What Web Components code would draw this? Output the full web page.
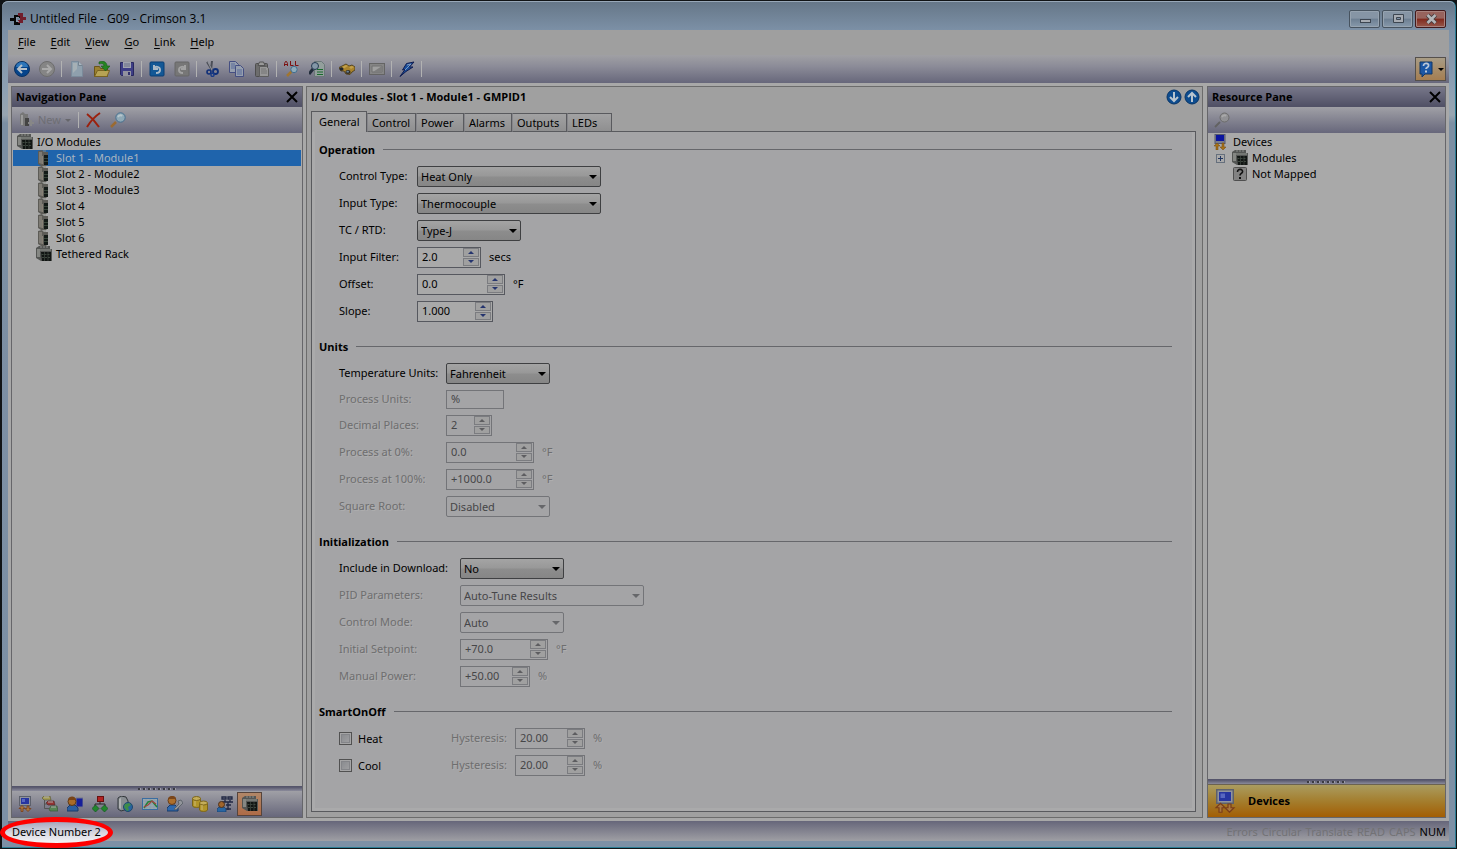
<!DOCTYPE html>
<html lang="en">
<head>
<meta charset="utf-8">
<title>Untitled File - G09 - Crimson 3.1</title>
<style>
html, body { margin: 0; }
body {
  min-height: 100vh; box-sizing: border-box; padding: 1px 1px 1px 2px; display: flex;
  background: #111416; color: #000;
  font: 11px/16px "Noto Sans", "Open Sans", sans-serif;
}
</style>
</head>
<body>
<cr-window>
  <cr-titlebar slot="title">Untitled File - G09 - Crimson 3.1</cr-titlebar>
  <cr-menubar slot="menu" items="File,Edit,View,Go,Link,Help"></cr-menubar>
  <cr-toolbar slot="toolbar" items="back:Back,forward:Forward,|,new:New,open:Open,save:Save,|,undo:Undo,redo:Redo,|,cut:Cut,copy:Copy,paste:Paste,|,findall:Find all,find:Find,|,binoc:Browse,|,screen:Screen,|,bolt:Download,|">
    <cr-help-button slot="end"></cr-help-button>
  </cr-toolbar>

  <cr-pane slot="left" heading="Navigation Pane">
    <cr-pane-tools slot="tools" kind="nav"></cr-pane-tools>
    <cr-tree-item icon="rack">I/O Modules</cr-tree-item>
    <cr-tree-item icon="module" level="1" selected>Slot 1 - Module1</cr-tree-item>
    <cr-tree-item icon="module" level="1">Slot 2 - Module2</cr-tree-item>
    <cr-tree-item icon="module" level="1">Slot 3 - Module3</cr-tree-item>
    <cr-tree-item icon="module" level="1">Slot 4</cr-tree-item>
    <cr-tree-item icon="module" level="1">Slot 5</cr-tree-item>
    <cr-tree-item icon="module" level="1">Slot 6</cr-tree-item>
    <cr-tree-item icon="rack" level="1">Tethered Rack</cr-tree-item>
    <cr-category-bar slot="footer" items="device:Communications,tags:Data tags,user:Display pages,flow:Programs,globe:Web server,chart:Data logger,wrench:Services,drums:SQL,security:Security,rack:I/O modules"></cr-category-bar>
  </cr-pane>

  <cr-editor slot="main" heading="I/O Modules - Slot 1 - Module1 - GMPID1">
    <cr-tabs slot="tabs" items="General,Control,Power,Alarms,Outputs,LEDs"></cr-tabs>
    <cr-section heading="Operation" style="--label: 78px">
      <cr-field type="select" label="Control Type:" value="Heat Only" width="184"></cr-field>
      <cr-field type="select" label="Input Type:" value="Thermocouple" width="184"></cr-field>
      <cr-field type="select" label="TC / RTD:" value="Type-J" width="104"></cr-field>
      <cr-field type="spin" label="Input Filter:" value="2.0" width="64" unit="secs"></cr-field>
      <cr-field type="spin" label="Offset:" value="0.0" width="88" unit="°F"></cr-field>
      <cr-field type="spin" label="Slope:" value="1.000" width="76"></cr-field>
    </cr-section>
    <cr-section heading="Units" style="--label: 107px">
      <cr-field type="select" label="Temperature Units:" value="Fahrenheit" width="104"></cr-field>
      <cr-field type="text" label="Process Units:" value="%" width="58" disabled></cr-field>
      <cr-field type="spin" label="Decimal Places:" value="2" width="46" disabled></cr-field>
      <cr-field type="spin" label="Process at 0%:" value="0.0" width="88" unit="°F" disabled></cr-field>
      <cr-field type="spin" label="Process at 100%:" value="+1000.0" width="88" unit="°F" disabled></cr-field>
      <cr-field type="select" label="Square Root:" value="Disabled" width="104" disabled></cr-field>
    </cr-section>
    <cr-section heading="Initialization" style="--label: 121px">
      <cr-field type="select" label="Include in Download:" value="No" width="104"></cr-field>
      <cr-field type="select" label="PID Parameters:" value="Auto-Tune Results" width="184" disabled></cr-field>
      <cr-field type="select" label="Control Mode:" value="Auto" width="104" disabled></cr-field>
      <cr-field type="spin" label="Initial Setpoint:" value="+70.0" width="88" unit="°F" disabled></cr-field>
      <cr-field type="spin" label="Manual Power:" value="+50.00" width="70" unit="%" disabled></cr-field>
    </cr-section>
    <cr-section heading="SmartOnOff" style="--label: 64px">
      <cr-check-row label="Heat"><cr-field type="spin" label="Hysteresis:" value="20.00" width="70" unit="%" disabled></cr-field></cr-check-row>
      <cr-check-row label="Cool"><cr-field type="spin" label="Hysteresis:" value="20.00" width="70" unit="%" disabled></cr-field></cr-check-row>
    </cr-section>
  </cr-editor>

  <cr-pane slot="right" heading="Resource Pane">
    <cr-pane-tools slot="tools" kind="resource"></cr-pane-tools>
    <cr-tree-item icon="devsmall">Devices</cr-tree-item>
    <cr-tree-item icon="rack" level="1" expandable>Modules</cr-tree-item>
    <cr-tree-item icon="unknown" level="1">Not Mapped</cr-tree-item>
    <cr-resource-bar slot="footer">Devices</cr-resource-bar>
  </cr-pane>

  <cr-statusbar slot="status" flags="Errors,Circular,Translate,READ,CAPS" active="NUM">Device Number 2</cr-statusbar>
</cr-window>

<script>
const ICONS = {
  logo: '<path d="M0 7h5v3H0zM4 4h6v3H7v4h3v3H4z" fill="#080808"/><path d="M8 2h5v4h3v3h-3v3H8V9h2V5H8z" fill="#711f2c"/><path d="M6 6h3v1H7v3h2v1H6z" fill="#8897a8"/>',
  back: '<circle cx="8" cy="8" r="7.500" fill="#06448b" stroke="#0b3262"/><path d="M2 6a6 5 0 0 1 12 0z" fill="#2d75b9"/><path d="M8 4 4 8l4 4M4.500 8H13" fill="none" stroke="#b5bfc8" stroke-width="2"/>',
  forward: '<circle cx="8" cy="8" r="7.500" fill="#858585" stroke="#6d6d6d"/><path d="M8 4l4 4-4 4M11.500 8H3" fill="none" stroke="#aaa" stroke-width="2"/>',
  new: '<path d="M2.500.5h7l4 4v11h-11z" fill="#8fa0ad" stroke="#7b8b9b"/><path d="M9.500.5v4h4" fill="#aab5be" stroke="#74828f"/><path d="M4 2h4v6l-4 4z" fill="#a6b0b5"/>',
  open: '<path d="M.5 15.500v-10h5l1 2h7v8z" fill="#9b8130" stroke="#6a551a"/><path d="M.5 15.500 3.500 9.500H15.500l-2.500 6z" fill="#b7a354" stroke="#796322"/><path d="M5 1c4-2 8 0 8 4h3l-4.500 5L7 5h3c0-2-2-3-5-2z" fill="#258421" stroke="#155b15" stroke-width=".6"/>',
  save: '<path d="M1.500 1.500h13v13h-12l-1-1z" fill="#3e3e86" stroke="#28285f"/><path d="M4 1h8v6H4z" fill="#a0a3ae"/><path d="M5 3h6M5 5h6" stroke="#666d88"/><path d="M4 10h8v5H4z" fill="#92929e"/><path d="M9 11h2v3H9z" fill="#32326d"/>',
  undo: '<rect x="1" y="1" width="14" height="14" rx="1" fill="#135896" stroke="#0a3e75"/><path d="M5 4v4h4M5 8c1-3 6-3 6 1 0 2-2 3-4 3" fill="none" stroke="#a9b8c5" stroke-width="2"/>',
  redo: '<rect x="1" y="1" width="14" height="14" rx="1" fill="#777" stroke="#666"/><path d="M11 4v4H7M11 8C10 5 5 5 5 9c0 2 2 3 4 3" fill="none" stroke="#a2a2a2" stroke-width="2"/>',
  cut: '<path d="M3 1l5 8M8 0 7 9" stroke="#4b4e57" stroke-width="2"/><path d="M4 1l4 8" stroke="#999ca3"/><circle cx="5" cy="11" r="2" fill="none" stroke="#102f78" stroke-width="1.600"/><circle cx="11.500" cy="10.500" r="2.500" fill="none" stroke="#102f78" stroke-width="1.800"/><circle cx="8.500" cy="13.800" r="1.600" fill="none" stroke="#183a86" stroke-width="1.400"/>',
  copy: '<g fill="#969fae" stroke="#454f82"><path d="M.5.5h6l3 3v8h-9z"/><path d="M6.500 4.500h5l3 3v8h-8z"/></g><path d="M2 3h4M2 5h5M2 7h4M8 9h5M8 11h5M8 13h5" stroke="#596b9a"/>',
  paste: '<rect x="1.500" y="2.500" width="12" height="13" rx="1" fill="#6d6d6d" stroke="#4e4e4e"/><path d="M4 4.500 5.500 1h4L11 4.500z" fill="#999" stroke="#555"/><path d="M5.500 5.500h7l2 2v8h-9z" fill="#979797" stroke="#5e5e5e"/><path d="M7 8h5M7 10h6M7 12h6" stroke="#747474"/>',
  findall: '<g fill="none" stroke="#7d1111" stroke-width="1"><path d="M.5 5V2.500l1-2h1l1 2V5M.5 3.500h3M6.500 0v4.500h3M11.500 0v4.500h3"/></g><path d="M3 15l5-5" stroke="#a17630" stroke-width="2.500"/><circle cx="10" cy="8.500" r="3.200" fill="#8eabba" stroke="#426f90"/>',
  find: '<path d="M5.500.5h7l3 3v12h-10z" fill="#939f9c" stroke="#6b7779"/><path d="M8 8.500h6M8 11h6M8 13.500h6" stroke="#186b2c"/><path d="M0 13l4-5" stroke="#212c3a" stroke-width="3"/><circle cx="6" cy="5" r="3.500" fill="#8397a7" stroke="#253951"/>',
  binoc: '<path d="M0 6.500 7 3l3 2 3-1 3 2v3l-3 2-2 2.500-4-.5-2-3H2z" fill="#a8822c" stroke="#463714" stroke-width=".8"/><path d="M3 6l4-2 2 1-4 2.500zM10 6l3-1 2 1-3 2z" fill="#c2a04a"/><ellipse cx="2.500" cy="8" rx="2" ry="1.700" fill="#22272c"/><ellipse cx="9" cy="11" rx="2.600" ry="1.900" fill="#302d26"/><ellipse cx="8.700" cy="10.700" rx="1.300" ry=".9" fill="#6d859b"/>',
  screen: '<rect x=".5" y="2.500" width="15" height="11" fill="#858585" stroke="#646464"/><path d="M3 5h10v6H3z" fill="#9f9f9f" stroke="#707070"/><path d="M4 11l9-6v6z" fill="#7d7d7d"/>',
  bolt: '<path d="M7.500 2.500 15 1 10.500 6H14L7 10.500 1 15.500 6 8.500 3.500 9z" fill="#194d9b" stroke="#101c50"/><path d="M8 4l4-1-6 6" stroke="#7d9bc0" fill="none"/>',
  rack: '<path d="M0 2 3 0h11v3h2v12H5L0 12z" fill="#545654"/><path d="M1 3h3v8H1z" fill="#858783"/><path d="M4 3h11v2H4z" fill="#747773"/><path d="M4 1h9" stroke="#8a8c89" stroke-dasharray="2 1"/><path d="M5 6h10v9H6z" fill="#111513"/><path d="M5.500 8.500h9M6 11.500h8" stroke="#3c463d" stroke-dasharray="2 1"/><path d="M8.500 6v9M12 6v9" stroke="#4a534b" stroke-width=".6"/>',
  module: '<path d="M2 1 6 0l2 2h4v12l-2 2H5l-3-2z" fill="#5d5c57"/><path d="M3 2h3v12l-3-1z" fill="#7e7b74"/><path d="M7 1h3" stroke="#858782"/><path d="M8 5h4v10H8z" fill="#131a17"/><path d="M8 8.500h4M8 11.500h4" stroke="#526353" stroke-width=".6"/><path d="M6.500 6v8" stroke="#878175"/>',
  addmod: '<path d="M2 2 5 0l2 2h3v12H5l-3-2z" fill="#777"/><path d="M3 3h2v10H3z" fill="#9a9a9a"/><path d="M7 6h4v8H7z" fill="#444"/><path d="M13 8v6M10 11h6" stroke="#878787" stroke-width="2"/>',
  delete: '<path d="M2 2c4 3 8 7 12 13M15 1C9 5 5 10 2 15" fill="none" stroke="#9b210e" stroke-width="2"/>',
  lens: '<path d="M1 15l5-5" stroke="#9b6b32" stroke-width="2.500"/><circle cx="10.500" cy="5.500" r="4.700" fill="#8fa9b6" stroke="#466f8f"/><path d="M8 5c1-2 3-2 4-1" fill="none" stroke="#b7c6cd" stroke-width="2"/>',
  lensgrey: '<path d="M1 15l5-5" stroke="#626262" stroke-width="2"/><circle cx="10.500" cy="5.500" r="4.500" fill="#919194" stroke="#6b6b6b"/><path d="M8 5c1-2 3-2 4-1" fill="none" stroke="#a9a9a9" stroke-width="2"/>',
  devsmall: '<rect x="2" y=".5" width="10" height="9" fill="#7a7d8b" stroke="#55596e"/><path d="M3 1h8v6H3z" fill="#0b159f"/><path d="M3 16v-4H1l3-3 3 3H5v4zM9 9v4H7l3 3 3-3h-2V9z" fill="#a67116" stroke="#754b0d" stroke-width=".5"/>',
  device: '<rect x="2.500" y=".5" width="11" height="9" fill="#90939c" stroke="#5c606c"/><rect x="4" y="2" width="8" height="6" fill="#2735a0"/><path d="M5 3h3v3H5z" fill="#5867c0"/><path d="M4 15.500v-3H2l3-3 3 3H6v3zM10 10v2.500H8l3 3 3-3h-2V10z" fill="#aa773d" stroke="#7a3d19" stroke-width=".8"/>',
  tags: '<path d="M0 2l2-2h6l1 4H2z" fill="#a39c56" stroke="#5d5a39" stroke-width=".7"/><path d="M4 7l2-2h6l1 4H6z" fill="#963333" stroke="#57282a" stroke-width=".7"/><path d="M7 13l2-3h6l1 5H8z" fill="#578555" stroke="#385537" stroke-width=".7"/><path d="M2 1h5M6 6h5M9 11h5" stroke="#b0aeac"/><path d="M2.500 4v8.500H7M3 8h2" fill="none" stroke="#555"/>',
  user: '<path d="M9 2h7v9H9z" fill="#171f9a" stroke="#70758b"/><path d="M0 15v-3l3-3h5l3 3v3z" fill="#2c5fa0" stroke="#193a69"/><circle cx="5" cy="5.500" r="4" fill="#aa6c28" stroke="#603915"/><path d="M1 4c1-5 8-4 8 0z" fill="#784317"/>',
  flow: '<path d="M8 5v3M3 11V8h10v3" fill="none" stroke="#272727"/><rect x="5.500" y=".5" width="6" height="5" fill="#b12323" stroke="#681010"/><path d="M3.500 9 7 12.500 3.500 16 0 12.500zM12.500 9l3.500 3.500-3.500 3.500L9 12.500z" fill="#21862d" stroke="#145820" stroke-width=".7"/>',
  globe: '<path d="M1 2 4 0l5 1 2 4v8l-7 2-3-2z" fill="#888d91" stroke="#31363a"/><path d="M2 3l2-1v11l-2-1z" fill="#afb2b3"/><circle cx="11" cy="11" r="4.500" fill="#2763a0" stroke="#1f486c"/><path d="M8 8l4-1 2 2-3 2 1 3-2 1-3-4z" fill="#3e8d48"/>',
  chart: '<rect x=".5" y="2.500" width="15" height="11" fill="#9aa7ad" stroke="#3a6da1"/><path d="M1 5h14M1 8h14M1 11h14M4 3v10M8 3v10M12 3v10" stroke="#7998ae" stroke-width=".5"/><path d="M2 12 6 6l4-1 5 6" fill="none" stroke="#248137" stroke-width="1.500"/><path d="M2 11l4-2 4-4 4 3" fill="none" stroke="#a34242" stroke-width="1.200"/>',
  wrench: '<path d="M0 15v-3l3-3h5l3 3v3z" fill="#2f69ad" stroke="#193a69"/><circle cx="5" cy="4.500" r="4" fill="#ad702c" stroke="#6a3e18"/><path d="M1 3c1-4 8-4 8 0z" fill="#7a461b"/><path d="M7 13l5-5-1-3 3-1 2 3-2 2-5 5z" fill="#92959a" stroke="#535a62" stroke-width=".8"/>',
  drums: '<g fill="#b19529" stroke="#7c651a"><path d="M.5 2v8c1 2 7 2 8 0V2"/><ellipse cx="4.500" cy="2.500" rx="4" ry="2" fill="#c4ad59"/><path d="M7.500 7v7c1 2 7 2 8 0V7"/><ellipse cx="11.500" cy="7" rx="4" ry="2" fill="#c4ad59"/></g><path d="M3 5v5M10 9v5" stroke="#cbb977"/>',
  security: '<path d="M5 1h4v2H5zM11 1h4v2h-4zM5 6h11M8 4v2M13 4v2M11 6v8M9 9h5M9 13h5" stroke="#202743" stroke-width="1.300" fill="none"/><path d="M0 16v-3l2-2h5l2 2v3z" fill="#2966a2" stroke="#193a69" stroke-width=".7"/><circle cx="4.500" cy="8.500" r="3" fill="#a1652b" stroke="#50321b"/>',
  unknown: '<rect x="1.500" y="1.500" width="13" height="13" rx="1" fill="#838383" stroke="#4f4f4f"/><path d="M5.500 6c0-4 6-3 5 0-.5 1.500-2.500 1.500-2.500 3.500" fill="none" stroke="#111" stroke-width="1.600"/><path d="M7 11h2v2H7z" fill="#111"/>',
  help: '<path d="M2 1h12v12H7l-3 3v-3H2z" fill="#1b57a5" stroke="#113767"/><path d="M5.500 5c0-4 6-3 5 0-.5 1.500-2.500 1.500-2.500 3" fill="none" stroke="#bac7d7" stroke-width="1.800"/><path d="M7 9.500h2v2H7z" fill="#bac7d7"/>',
  down: '<circle cx="8" cy="8" r="7" fill="#0d4c8f" stroke="#083567"/><path d="M8 3v8M4 8l4 4 4-4" fill="none" stroke="#b8c4ce" stroke-width="2"/>',
  up: '<circle cx="8" cy="8" r="7" fill="#0d4c8f" stroke="#083567"/><path d="M8 13V5M4 8l4-4 4 4" fill="none" stroke="#b8c4ce" stroke-width="2"/>',
  close: '<path d="M3 3l10 10M13 3 3 13" stroke="#000" stroke-width="2"/>',
  wmin: '<rect x="3.500" y="8.500" width="10" height="3" fill="#a7acb3" stroke="#3d4651"/>',
  wmax: '<path d="M3.500 3.500h10v8h-10z" fill="#a7acb3" stroke="#3d4651"/><path d="M6.500 6.500h4v2h-4z" fill="#7e91a8" stroke="#3d4651"/>',
  wclose: '<path d="M4.500 4l8 8M12.500 4l-8 8" stroke="#463b3e" stroke-width="4.500"/><path d="M4.500 4l8 8M12.500 4l-8 8" stroke="#b4b6b9" stroke-width="2.600"/>'
};

const BASE = '*,:host{box-sizing:border-box} button{font:inherit;color:inherit;margin:0;padding:0;border:0;background:none} ';
const BOLD = 'font-family:"Open Sans","Noto Sans",sans-serif;font-size:11px;font-weight:700;';
function define(name, render) {
  customElements.define(name, class extends HTMLElement {
    constructor() { super(); this.attachShadow({ mode: 'open' }); }
    connectedCallback() {
      const { css, html } = render(this, k => this.getAttribute(k) || '');
      this.shadowRoot.innerHTML = '<style>' + BASE + css + '</style>' + html;
    }
  });
}
const list = s => s.split(',').filter(Boolean);

define('cr-icon', (el, a) => ({
  css: ':host{display:block;flex:none;width:16px;height:16px} svg{display:block;width:100%;height:100%}',
  html: `<svg viewBox="0 0 16 16" aria-hidden="true">${ICONS[a('name')]}</svg>`
}));

define('cr-window', () => ({
  css: `:host{flex:1;display:flex;flex-direction:column;min-width:0;padding:0 6px 6px 6px;border-right:1px solid #2b7d94;border-bottom:1px solid #2b7d94;
      border-radius:6px 6px 0 0;background:linear-gradient(#657687 0,#7c90a6 29px,#8ea1b4 90px,#98a5b0 114px,#7c8fa3 122px,#7d90a5 100%);box-shadow:inset 0 1px #98a8b8}
    .body{flex:1;display:grid;grid-template-columns:292px minmax(0,1fr) 239px;gap:3px;padding:3px 3px 3px 3px;background:#a8a8a8}
    ::slotted(*){min-width:0}`,
  html: `<slot name="title"></slot><slot name="menu"></slot><slot name="toolbar"></slot>
    <div class="body"><slot name="left"></slot><slot name="main"></slot><slot name="right"></slot></div><slot name="status"></slot>`
}));

define('cr-titlebar', () => ({
  css: `:host{display:flex;align-items:center;height:29px;padding:6px 3px 0 2px;font-size:12px;font-family:"Open Sans","Noto Sans",sans-serif}
    .t{flex:1;padding-left:4px} .b{display:flex;gap:2px}
    button{width:31px;height:18px;display:grid;place-items:center;border:1px solid #47535f;border-radius:2px;background:linear-gradient(#8695a5 45%,#6d7f92 50%,#8799ab);box-shadow:inset 0 0 0 1px #96a3b0}
    .x{border-color:#42191b;background:linear-gradient(#97635d 45%,#80291d 50%,#96584c);box-shadow:inset 0 0 0 1px #a8827e}`,
  html: `<cr-icon name="logo"></cr-icon><span class="t"><slot></slot></span><span class="b">
    <button aria-label="Minimize"><cr-icon name="wmin"></cr-icon></button><button aria-label="Maximize"><cr-icon name="wmax"></cr-icon></button><button class="x" aria-label="Close"><cr-icon name="wclose"></cr-icon></button></span>`
}));

define('cr-menubar', (el, a) => ({
  css: `:host{display:flex;height:25px;padding:0 0 2px 10px;gap:15px;align-items:center;background:#9f9f9f} u{text-underline-offset:2px}`,
  html: list(a('items')).map(t => `<button><u>${t[0]}</u>${t.slice(1)}</button>`).join('')
}));

define('cr-toolbar', (el, a) => ({
  css: `:host{display:flex;align-items:center;height:28px;padding:0 3px 0 1px;background:linear-gradient(#a0a0a4,#8c8c98 40%,#67677b)}
    .b{width:25px;height:24px;display:grid;place-items:center} .s{width:5px;height:16px;display:flex;justify-content:center} .s::before{content:"";width:1px;background:#b2b2b2}
    .g{flex:1}`,
  html: list(a('items')).map(t => t === '|' ? '<span class="s"></span>'
    : `<button class="b" aria-label="${t.split(':')[1]}"><cr-icon name="${t.split(':')[0]}"></cr-icon></button>`).join('') + '<span class="g"></span><slot name="end"></slot>'
}));

define('cr-help-button', () => ({
  css: `:host{display:block} button{width:31px;height:24px;display:flex;align-items:center;gap:4px;padding-left:2px;border:1px solid #55504b;background:linear-gradient(#a89c85,#a57e51)}
    i{border:3px solid transparent;border-top-color:#000;border-bottom:0}`,
  html: '<button aria-label="Help"><cr-icon name="help"></cr-icon><i></i></button>'
}));

define('cr-pane', (el, a) => ({
  css: `:host{display:flex;flex-direction:column;border:1px solid #66666a;background:#a9a9a9}
    header{display:flex;align-items:center;height:20px;padding:0 2px 0 4px;background:linear-gradient(#777789,#515166);border-bottom:1px solid #515166}
    h2{flex:1;margin:0;${BOLD}} .tree{flex:1;padding:1px}
    .split{height:5px;display:flex;justify-content:center;align-items:center;background:linear-gradient(#55556b,#8b8b9b);border-top:1px solid #55556b}
    .split i{width:39px;height:2px;background:repeating-linear-gradient(90deg,#3b3b42 0 2px,#9c9ca6 2px 3px,transparent 3px 5px)}`,
  html: `<header><h2>${a('heading')}</h2><button aria-label="Close pane"><cr-icon name="close"></cr-icon></button></header>
    <slot name="tools"></slot><div class="tree"><slot></slot></div><div class="split"><i></i></div><slot name="footer"></slot>`
}));

define('cr-pane-tools', (el, a) => ({
  css: `:host{display:flex;align-items:center;height:26px;padding-left:6px;background:linear-gradient(#a0a0a6,#67677b)}
    .n{display:flex;align-items:center;gap:4px;color:#6e6e74;width:56px} .n i{border:3px solid transparent;border-top-color:#66666b;border-bottom:0}
    .s{width:1px;height:16px;margin:0 6px 0 4px;background:#b2b2b2} .t{margin-right:9px} `,
  html: a('kind') === 'nav'
    ? `<button class="n" disabled><cr-icon name="addmod"></cr-icon><span>New</span><i></i></button><span class="s"></span>
       <button class="t" aria-label="Delete"><cr-icon name="delete"></cr-icon></button><button aria-label="Find"><cr-icon name="lens"></cr-icon></button>`
    : `<button aria-label="Find" disabled><cr-icon name="lensgrey"></cr-icon></button>`
}));

define('cr-tree-item', (el, a) => ({
  css: `:host{display:flex;align-items:center;height:16px;padding-left:4px}
    :host([selected]){background:#1f64ac;color:#a9b4c0}
    .in{width:19px;padding-left:3px;display:flex} .x{width:9px;height:9px;border:1px solid #66707d;background:linear-gradient(#203560,#203560) 50% 50%/5px 1px no-repeat,linear-gradient(#203560,#203560) 50% 50%/1px 5px no-repeat}
    span{padding-left:4px;white-space:nowrap}`,
  html: (a('level') ? `<div class="in">${el.hasAttribute('expandable') ? '<button class="x" aria-label="Expand"></button>' : ''}</div>` : '')
    + `<cr-icon name="${a('icon')}"></cr-icon><span><slot></slot></span>`
}));

define('cr-category-bar', (el, a) => ({
  css: `:host{display:flex;align-items:center;height:26px;background:linear-gradient(#a0a0a6,#67677b)}
    button{width:25px;height:24px;display:grid;place-items:center} button:last-child{border:1px solid #56443c;background:linear-gradient(#b18768,#ae6b47)}`,
  html: list(a('items')).map(t => `<button aria-label="${t.split(':')[1]}"><cr-icon name="${t.split(':')[0]}"></cr-icon></button>`).join('')
}));

define('cr-resource-bar', () => ({
  css: `:host{display:block} button{width:100%;height:33px;display:flex;align-items:center;gap:11px;padding-left:5px;${BOLD}background:linear-gradient(#aa9c60,#a47e2e 50%,#a35e04);border-top:1px solid #6b6250}
    cr-icon{width:24px;height:24px}`,
  html: '<button><cr-icon name="device"></cr-icon><slot></slot></button>'
}));

define('cr-editor', (el, a) => ({
  css: `:host{display:flex;flex-direction:column;margin:0 1px 0 0;border:1px solid #6c6c6c;background:#a0a0a0;padding:2px 6px 5px 4px}
    header{display:flex;align-items:center;gap:2px;height:16px;margin-right:-4px} h1{flex:1;margin:0;${BOLD}}
    .page{flex:1;border:1px solid #595a5e;border-top:0;padding:4px 23px 8px 3px;background:#a4a4a6;box-shadow:inset 3px 0 #aaaaab,inset -3px 0 #aaaaab,inset 0 -3px #aaaaab}
    .page ::slotted(*){margin-left:4px} slot[name=tabs]{display:block;margin-top:6px}`,
  html: `<header><h1>${a('heading')}</h1><button aria-label="Next"><cr-icon name="down"></cr-icon></button><button aria-label="Previous"><cr-icon name="up"></cr-icon></button></header>
    <slot name="tabs"></slot><div class="page"><slot></slot></div>`
}));

define('cr-tabs', (el, a) => ({
  css: `:host{display:flex;align-items:flex-end;height:21px}
    button{height:19px;padding:0 4px;border:1px solid #595a5e;border-left-color:#85858a;background:linear-gradient(#a2a2a3,#8f8f90);text-align:left;width:48px}
    button:nth-of-type(2){width:49px} button:nth-of-type(5){width:55px} button:last-of-type{width:45px}
    .on{width:56px;height:21px;padding:0 7px 1px;border-bottom:0;border-left-color:#595a5e;background:#a5a5a6}
    i{flex:1;height:1px;background:#595a5e}`,
  html: list(a('items')).map((t, i) => `<button role="tab" aria-selected="${!i}" class="${i ? '' : 'on'}">${t}</button>`).join('') + '<i></i>'
}));

define('cr-section', (el, a) => ({
  css: `:host{display:block;margin-bottom:8px} header{display:flex;align-items:center;gap:8px;height:27px} h3{margin:0;${BOLD}} header::after{content:"";flex:1;height:1px;background:#66676b}
    .rows{padding-left:20px}`,
  html: `<header><h3>${a('heading')}</h3></header><div class="rows"><slot></slot></div>`
}));

define('cr-field', (el, a) => {
  const t = a('type'), dis = el.hasAttribute('disabled') ? 'disabled' : '';
  const css = `:host{display:flex;align-items:center;height:27px;white-space:nowrap} :host([type=text]){height:25px} :host([disabled]){color:#6f6f72}
    label{width:var(--label)} label,.unit{padding-bottom:2px} .box{position:relative;display:flex;height:21px;width:${a('width')}px}
    select,input{font:inherit;color:inherit;margin:0;border-radius:0;opacity:1;min-width:0}
    select{appearance:none;width:100%;height:21px;padding:1px 3px 0;border:1px solid #3f4042;border-radius:2px;background:linear-gradient(#a4a4a4,#989898 48%,#8d8d8d 52%,#868686)}
    .c{position:absolute;right:4px;top:9px;border:4px solid transparent;border-top-color:#000;border-bottom:0;pointer-events:none}
    input{width:100%;height:100%;padding:0 4px 2px;border:0;background:none;outline:0}
    .spin{border:1px solid #56585f;background:#a9a9a9} .plain{height:19px;border:1px solid #737478}
    .btns{flex:none;display:flex;flex-direction:column;gap:1px;width:17px;padding:0 1px 1px 0}
    .btns button{flex:1;display:grid;place-items:center;border:1px solid #7b7c80;background:#a0a0a0}
    .btns i{border:3px solid transparent;border-bottom-color:#25346e;border-top:0} .btns i.d{border:3px solid transparent;border-top-color:#25346e;border-bottom:0}
    .unit{padding-left:8px}
    :host([disabled]) label,:host([disabled]) .unit{color:#6e6e6f;text-shadow:1px 1px #aeaeaf}
    :host([disabled]) select,:host([disabled]) input{color:#464648}
    :host([disabled]) select{border-color:#737478;background:#a4a4a6} :host([disabled]) .c{border-top-color:#66676a}
    :host([disabled]) .spin{border-color:#737478;background:#a4a4a6} :host([disabled]) .btns i{border-bottom-color:#5d5d60} :host([disabled]) .btns i.d{border-bottom-color:transparent;border-top-color:#5d5d60}`;
  const ctl = t === 'select' ? `<div class="box"><select id="c" ${dis}><option>${a('value')}</option></select><i class="c"></i></div>`
    : t === 'spin' ? `<div class="box spin"><input id="c" value="${a('value')}" ${dis}><div class="btns"><button aria-label="Increase" ${dis}><i></i></button><button aria-label="Decrease" ${dis}><i class="d"></i></button></div></div>`
    : `<div class="box plain"><input id="c" value="${a('value')}" ${dis}></div>`;
  return { css, html: `<label for="c">${a('label')}</label>${ctl}${a('unit') ? `<span class="unit">${a('unit')}</span>` : ''}` };
});

define('cr-check-row', (el, a) => ({
  css: `:host{display:flex;align-items:center;height:27px} label{width:112px;display:flex;align-items:center;gap:6px}
    input{appearance:none;margin:0;width:13px;height:13px;border:1px solid #515151;background:linear-gradient(135deg,#85878b,#a3a3a5);box-shadow:inset 0 0 0 1px #a5a5a6,inset 0 0 0 2px #848589}`,
  html: `<label><input type="checkbox"><span>${a('label')}</span></label><slot></slot>`
}));

define('cr-statusbar', (el, a) => ({
  css: `:host{display:flex;align-items:center;height:20px;padding:2px 3px 0 4px;position:relative;background:linear-gradient(#66667a,#9f9fa4)}
    .ring{position:absolute;left:-8px;top:-4px;width:113px;height:31px;border:5px solid #f00;border-radius:50%;background:linear-gradient(#a6a6be,#d6d6e0 50%,#f4f4f6)}
    .m{flex:1;position:relative} .f{display:flex;gap:4px;color:#727275} b{font-weight:400;color:#000}`,
  html: `<div class="ring"></div><span class="m"><slot></slot></span><div class="f">${list(a('flags')).map(f => `<span>${f}</span>`).join('')}<b>${a('active')}</b></div>`
}));
</script>
</body>
</html>
